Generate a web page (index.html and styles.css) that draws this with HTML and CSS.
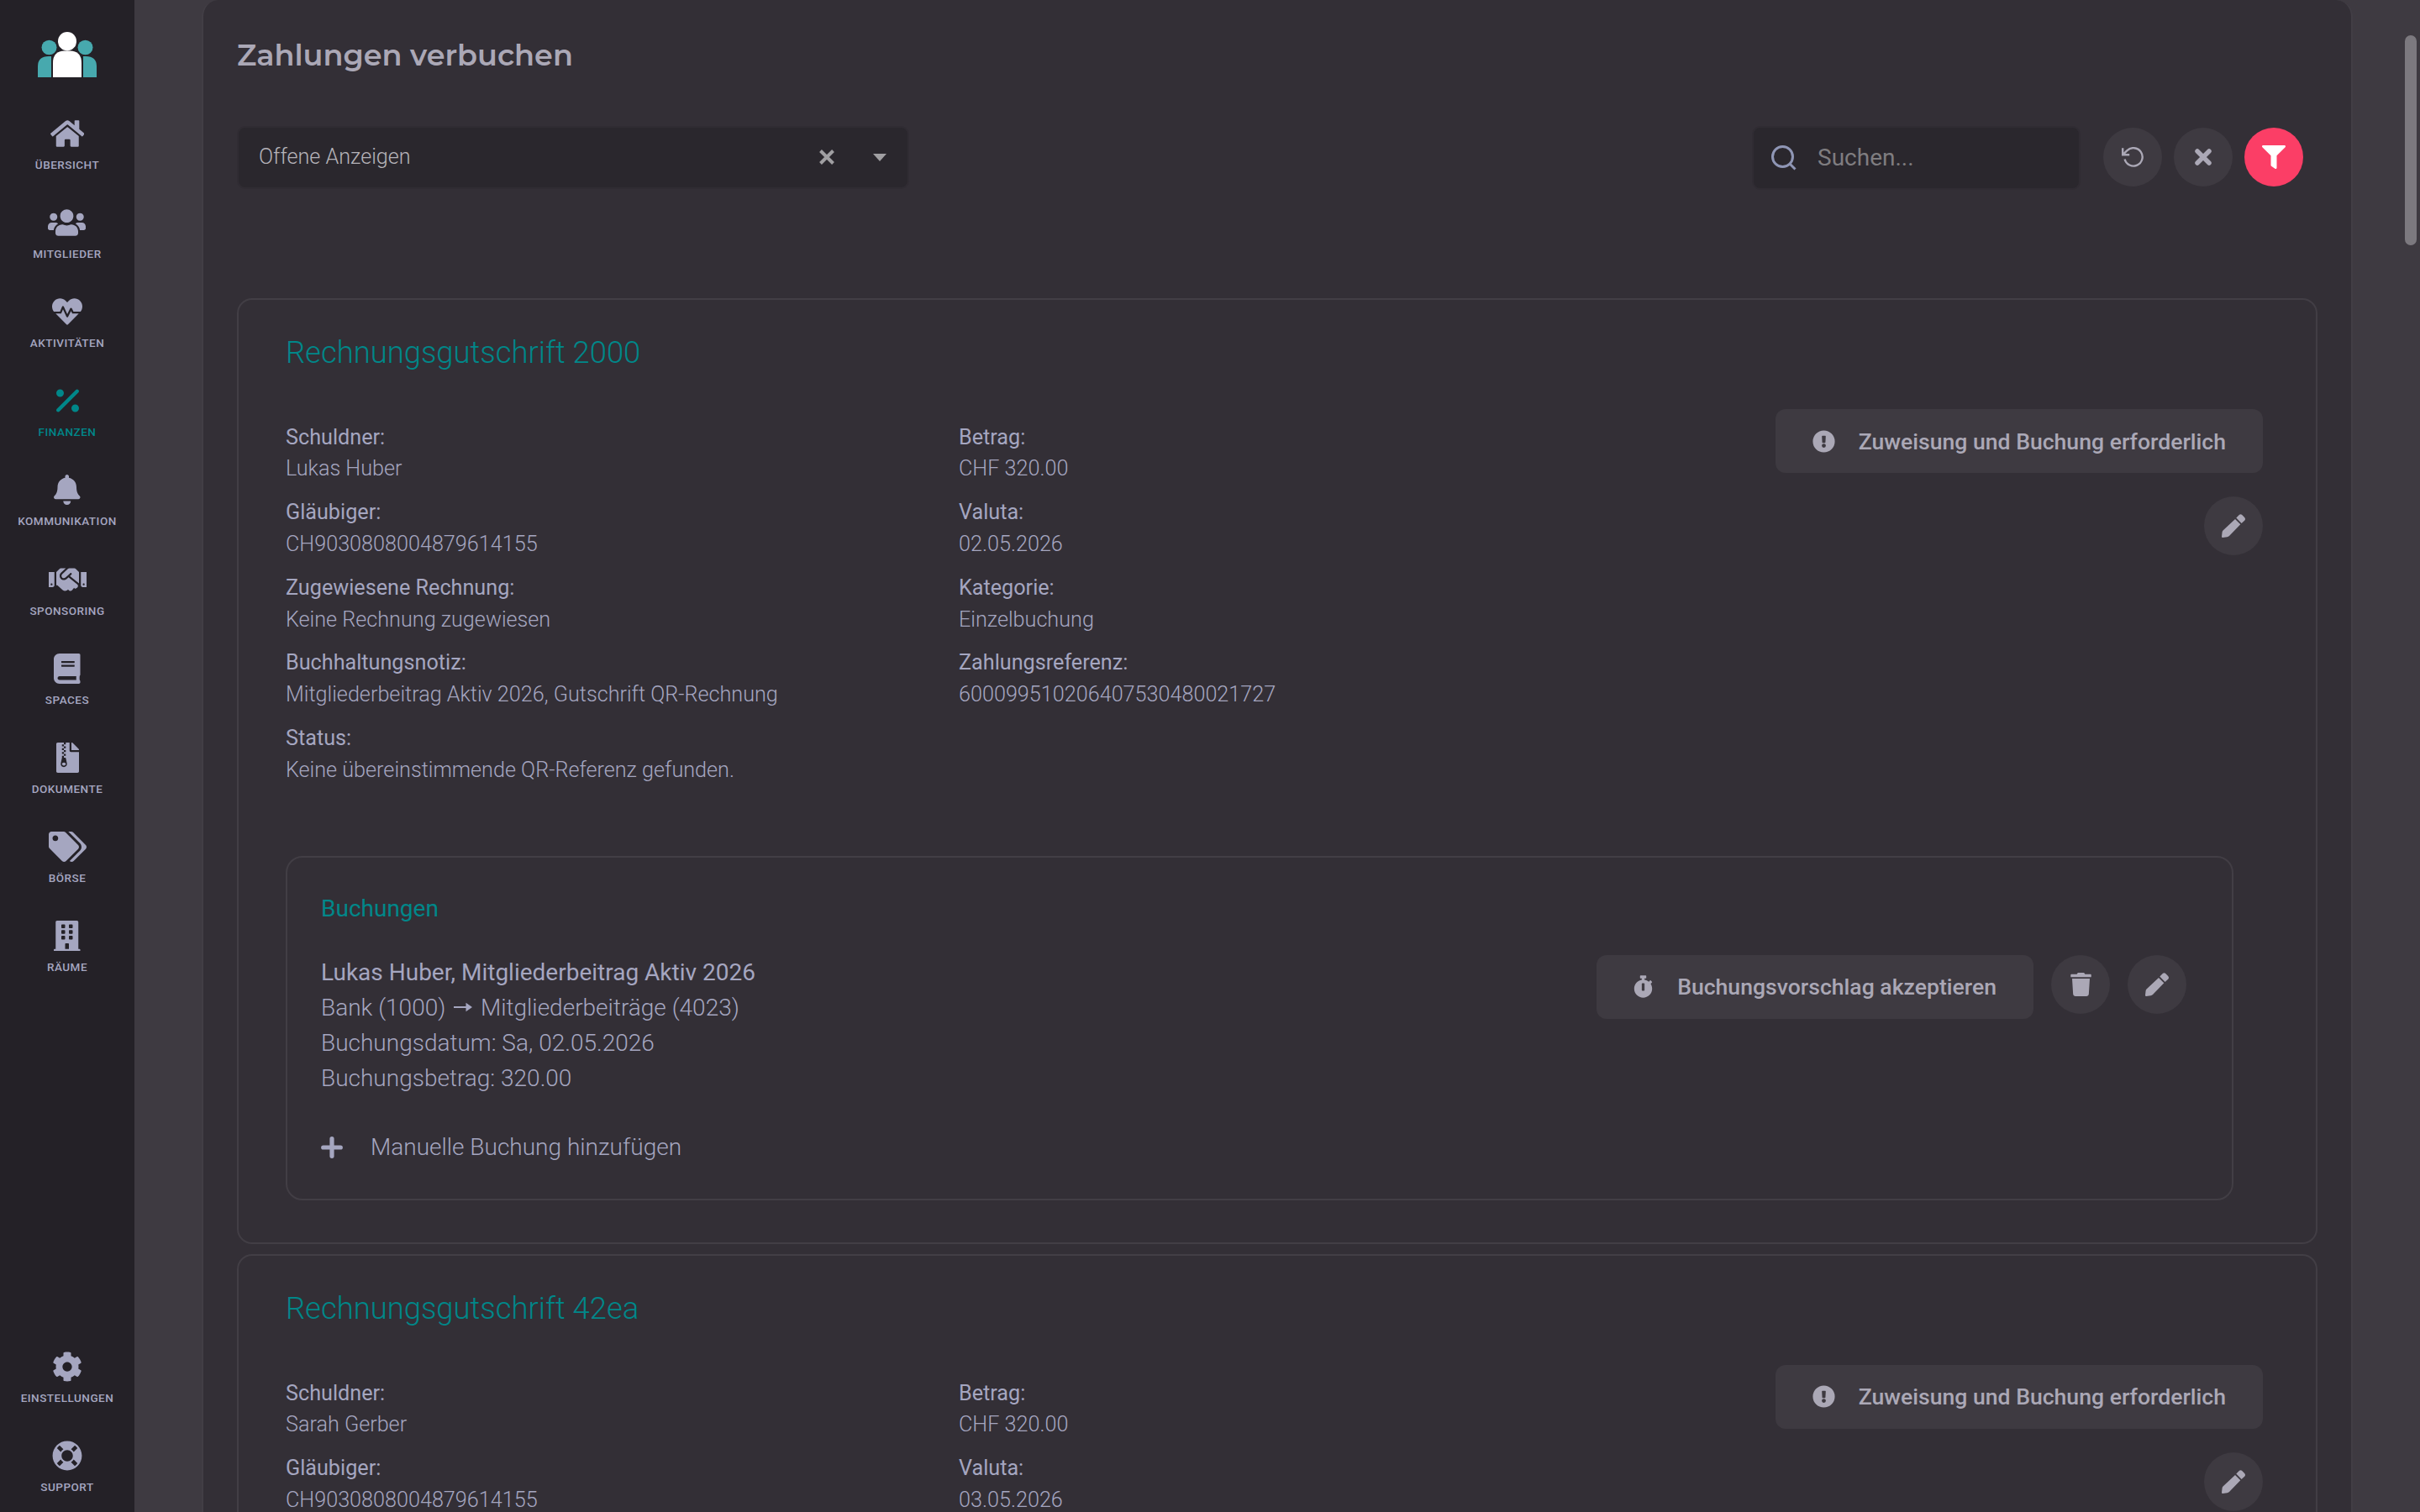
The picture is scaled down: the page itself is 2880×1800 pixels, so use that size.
FILE: index.html
```html
<!DOCTYPE html>
<html lang="de">
<head>
    <meta charset="UTF-8">
    <meta name="viewport" content="width=device-width, initial-scale=1.0">
    <title>Zahlungen verbuchen</title>
    <link rel="stylesheet" href="styles.css">
</head>
<body>
    <!-- Shared button icons -->
    <svg class="icon-defs" aria-hidden="true">
        <symbol id="icon-pencil" viewBox="0 0 28 28">
            <path d="M16 6l6.300 6.300L9 26q-1 1-2.500 1.300L1.200 28Q0 28 0 27l.6-5.500q.2-1.500 1.200-2.300zM17.300 4.600L21 .8q1.500-1.200 3 0L27.200 4q1.500 1.900.2 3.400L23.600 11z"/>
        </symbol>
        <symbol id="icon-alert" viewBox="0 0 512 512">
            <path fill-rule="evenodd" d="M504 256a248 248 0 1 1-496 0 248 248 0 1 1 496 0zM256 306a46 46 0 1 0 0 92 46 46 0 1 0 0-92zM212.300 140.700l7.400 136c.300 6.300 5.600 11.300 12 11.300h48.600c6.400 0 11.600-5 12-11.300l7.400-136c.400-6.900-5.100-12.700-12-12.700h-63.400c-6.900 0-12.300 5.800-12 12.700z"/>
        </symbol>
    </svg>

    <nav class="sidebar">
        <a class="logo" href="#">
            <svg viewBox="0 0 70 54">
                <g fill="#47a9ae">
                    <ellipse cx="13.500" cy="18.500" rx="9" ry="8.700"/>
                    <path d="M0 54V41q0-12 13-12h3v25z"/>
                    <ellipse cx="56.500" cy="18.500" rx="9" ry="8.700"/>
                    <path d="M70 54V41q0-12-13-12h-3v25z"/>
                </g>
                <path fill="#fff" d="M18 54V37q0-14.500 14-14.500h6q14 0 14 14.500v17z"/>
                <ellipse fill="#fff" cx="35" cy="11.200" rx="11" ry="11.200"/>
            </svg>
        </a>
        <a class="nav-item" href="#">
            <svg viewBox="0 0 576 512"><path d="M280.37 148.26L96 300.11V464a16 16 0 0 0 16 16l112.06-.29a16 16 0 0 0 15.92-16V368a16 16 0 0 1 16-16h64a16 16 0 0 1 16 16v95.64a16 16 0 0 0 16 16.05L464 480a16 16 0 0 0 16-16V300L295.67 148.26a12.19 12.19 0 0 0-15.3 0zM571.6 251.47L488 182.56V44.05a12 12 0 0 0-12-12h-56a12 12 0 0 0-12 12v72.61L318.47 43a48 48 0 0 0-61 0L4.34 251.47a12 12 0 0 0-1.6 16.9l25.5 31A12 12 0 0 0 45.15 301l235.22-193.74a12.19 12.19 0 0 1 15.3 0L530.9 301a12 12 0 0 0 16.9-1.6l25.5-31a12 12 0 0 0-1.7-16.93z"/></svg>
            <span>Übersicht</span>
        </a>
        <a class="nav-item" href="#">
            <svg viewBox="0 0 640 512"><path d="M96 224c35.3 0 64-28.7 64-64s-28.7-64-64-64-64 28.7-64 64 28.7 64 64 64zm448 0c35.3 0 64-28.7 64-64s-28.7-64-64-64-64 28.7-64 64 28.7 64 64 64zm32 32h-64c-17.6 0-33.5 7.1-45.1 18.6 40.3 22.1 68.9 62 75.1 109.4h66c17.7 0 32-14.3 32-32v-32c0-35.3-28.7-64-64-64zm-256 0c61.9 0 112-50.1 112-112S381.9 32 320 32 208 82.1 208 144s50.1 112 112 112zm76.8 32h-8.3c-20.8 10-43.9 16-68.5 16s-47.6-6-68.5-16h-8.3C179.6 288 128 339.6 128 403.2V432c0 26.5 21.5 48 48 48h288c26.500 0 48-21.500 48-48v-28.8c0-63.600-51.600-115.200-115.200-115.200zm-223.700-13.400C161.500 263.100 145.600 256 128 256H64c-35.300 0-64 28.700-64 64v32c0 17.700 14.300 32 32 32h65.900c6.300-47.400 34.900-87.300 75.200-109.400z"/></svg>
            <span>Mitglieder</span>
        </a>
        <a class="nav-item" href="#">
            <svg viewBox="0 0 512 512"><path d="M320.2 243.8l-49.7 99.4c-6 12.1-23.4 11.7-28.9-.6l-56.9-126.3-30 71.7H60.6l182.5 186.5c7.1 7.3 18.6 7.3 25.7 0L451.4 288H342.3l-22.1-44.2zM473.7 73.9l-2.4-2.5c-51.5-52.6-135.8-52.6-187.4 0L256 100l-27.9-28.5c-51.5-52.7-135.9-52.7-187.4 0l-2.4 2.4C-10.4 123.7-12.5 203 31 256h102.4l35.9-86.2c5.4-12.9 23.6-13.2 29.4-.4l58.2 129.3 49-97.9c5.9-11.8 22.7-11.8 28.6 0l27.6 55.2H481c43.5-53 41.4-132.3-7.3-182.1z"/></svg>
            <span>Aktivitäten</span>
        </a>
        <a class="nav-item active" href="#">
            <svg viewBox="0 0 384 512"><path d="M374.6 118.6c12.5-12.5 12.5-32.8 0-45.3s-32.8-12.5-45.3 0l-320 320c-12.5 12.5-12.5 32.8 0 45.3s32.8 12.5 45.3 0l320-320zM128 128A64 64 0 1 0 0 128a64 64 0 1 0 128 0zM384 384a64 64 0 1 0-128 0 64 64 0 1 0 128 0z"/></svg>
            <span>Finanzen</span>
        </a>
        <a class="nav-item" href="#">
            <svg viewBox="0 0 448 512"><path d="M224 512c35.32 0 63.97-28.65 63.97-64H160.03c0 35.35 28.65 64 63.97 64zm215.39-149.71c-19.32-20.76-55.47-51.99-55.47-154.29 0-77.7-54.48-139.9-127.94-155.16V32c0-17.67-14.32-32-31.98-32s-31.98 14.33-31.98 32v20.84C118.56 68.1 64.08 130.3 64.08 208c0 102.3-36.15 133.53-55.47 154.29-6 6.45-8.66 14.16-8.61 21.71.11 16.4 12.98 32 32.1 32h383.8c19.12 0 32-15.6 32.1-32 .05-7.55-2.61-15.27-8.61-21.71z"/></svg>
            <span>Kommunikation</span>
        </a>
        <a class="nav-item" href="#">
            <svg viewBox="0 0 640 512"><path d="M434.7 64h-85.9c-8 0-15.7 3-21.6 8.4l-98.3 90c-.1.1-.2.3-.3.4-16.6 15.6-16.3 40.5-2.1 56 12.7 13.9 39.4 17.6 56.1 2.7.1-.1.3-.1.4-.2l79.9-73.2c6.5-5.9 16.7-5.5 22.6 1 6 6.5 5.5 16.6-1 22.6l-26.1 23.9L504 313.8c2.9 2.4 5.5 5 7.9 7.7V128l-54.6-54.6c-5.9-6-14.1-9.4-22.6-9.4zM544 128.2v223.9c0 17.7 14.3 32 32 32h64V128.2h-96zm48 223.9c-8.8 0-16-7.2-16-16s7.2-16 16-16 16 7.2 16 16-7.2 16-16 16zM0 384h64c17.7 0 32-14.3 32-32V128.2H0V384zm48-63.9c8.8 0 16 7.2 16 16s-7.2 16-16 16-16-7.2-16-16c0-8.9 7.2-16 16-16zm435.9 18.6L334.6 217.5l-30 27.5c-29.7 27.1-75.2 24.5-101.7-4.4-26.9-29.4-24.8-74.9 4.4-101.7L289.1 64h-83.8c-8.5 0-16.6 3.4-22.6 9.4L128 128v223.9h18.3l90.5 81.9c27.4 22.3 67.7 18.1 90-9.3l.2-.2 17.9 15.5c15.9 13 39.4 10.5 52.3-5.4l31.4-38.6 5.4 4.4c13.7 11.1 33.9 9.1 45-4.7l9.5-11.7c11.2-13.8 9.1-33.9-4.6-45.1z"/></svg>
            <span>Sponsoring</span>
        </a>
        <a class="nav-item" href="#">
            <svg viewBox="0 0 448 512"><path d="M448 360V24c0-13.3-10.7-24-24-24H96C43 0 0 43 0 96v320c0 53 43 96 96 96h328c13.3 0 24-10.7 24-24v-16c0-7.5-3.5-14.3-8.9-18.7-4.2-15.4-4.2-59.3 0-74.7 5.4-4.3 8.9-11.1 8.9-18.6zM128 134c0-3.3 2.7-6 6-6h212c3.3 0 6 2.7 6 6v20c0 3.3-2.7 6-6 6H134c-3.3 0-6-2.7-6-6v-20zm0 64c0-3.3 2.7-6 6-6h212c3.3 0 6 2.7 6 6v20c0 3.3-2.7 6-6 6H134c-3.3 0-6-2.7-6-6v-20zm253.4 250H96c-17.7 0-32-14.3-32-32 0-17.6 14.4-32 32-32h285.4c-1.9 17.1-1.9 46.9 0 64z"/></svg>
            <span>Spaces</span>
        </a>
        <a class="nav-item" href="#">
            <svg viewBox="0 0 384 512"><path d="M377 105L279.1 7c-4.5-4.5-10.6-7-17-7H256v128h128v-6.1c0-6.3-2.5-12.4-7-16.9zM128.400 336c-17.900 0-32.400 12.100-32.400 27 0 15 14.600 27 32.500 27s32.400-12.100 32.400-27-14.600-27-32.500-27zM224 136V0h-63.6v32h-32V0H24C10.7 0 0 10.7 0 24v464c0 13.3 10.7 24 24 24h336c13.3 0 24-10.7 24-24V160H248c-13.2 0-24-10.8-24-24zM95.900 32h32v32h-32zm32.300 384c-33.200 0-58-30.400-51.400-62.900L96.400 256v-32h32v-32h-32v-32h32v-32h-32V96h32V64h32v32h-32v32h32v32h-32v32h32v32h-32v32h22.100c5.700 0 10.700 4.100 11.800 9.700l17.300 87.700c6.400 32.400-18.400 62.600-51.400 62.600z"/></svg>
            <span>Dokumente</span>
        </a>
        <a class="nav-item" href="#">
            <svg viewBox="0 0 640 512"><path d="M497.941 225.941L286.059 14.059A48 48 0 0 0 252.118 0H48C21.49 0 0 21.49 0 48v204.118a48 48 0 0 0 14.059 33.941l211.882 211.882c18.744 18.745 49.136 18.746 67.882 0l204.118-204.118c18.745-18.745 18.745-49.137 0-67.882zM112 160c-26.51 0-48-21.49-48-48s21.49-48 48-48 48 21.49 48 48-21.49 48-48 48zm513.941 133.823L421.823 497.941c-18.745 18.745-49.137 18.745-67.882 0l-.36-.36L527.64 323.522c16.999-16.999 26.36-39.6 26.36-63.64s-9.362-46.641-26.36-63.64L331.397 0h48.721a48 48 0 0 1 33.941 14.059l211.882 211.882c18.745 18.745 18.745 49.137 0 67.882z"/></svg>
            <span>Börse</span>
        </a>
        <a class="nav-item" href="#">
            <svg viewBox="0 0 448 512"><path d="M436 480h-20V24c0-13.255-10.745-24-24-24H56C42.745 0 32 10.745 32 24v456H12c-6.627 0-12 5.373-12 12v20h448v-20c0-6.627-5.373-12-12-12zM128 76c0-6.627 5.373-12 12-12h40c6.627 0 12 5.373 12 12v40c0 6.627-5.373 12-12 12h-40c-6.627 0-12-5.373-12-12V76zm0 96c0-6.627 5.373-12 12-12h40c6.627 0 12 5.373 12 12v40c0 6.627-5.373 12-12 12h-40c-6.627 0-12-5.373-12-12v-40zm52 148h-40c-6.627 0-12-5.373-12-12v-40c0-6.627 5.373-12 12-12h40c6.627 0 12 5.373 12 12v40c0 6.627-5.373 12-12 12zm76 160h-64v-84c0-6.627 5.373-12 12-12h40c6.627 0 12 5.373 12 12v84zm64-172c0 6.627-5.373 12-12 12h-40c-6.627 0-12-5.373-12-12v-40c0-6.627 5.373-12 12-12h40c6.627 0 12 5.373 12 12v40zm0-96c0 6.627-5.373 12-12 12h-40c-6.627 0-12-5.373-12-12v-40c0-6.627 5.373-12 12-12h40c6.627 0 12 5.373 12 12v40zm0-96c0 6.627-5.373 12-12 12h-40c-6.627 0-12-5.373-12-12V76c0-6.627 5.373-12 12-12h40c6.627 0 12 5.373 12 12v40z"/></svg>
            <span>Räume</span>
        </a>
        <div class="sidebar-bottom">
            <a class="nav-item" href="#">
                <svg viewBox="0 0 512 512"><path d="M487.4 315.7l-42.6-24.6c4.3-23.2 4.3-47 0-70.2l42.6-24.6c4.9-2.8 7.1-8.6 5.5-14-11.1-35.6-30-67.8-54.7-94.6-3.8-4.1-10-5.1-14.8-2.3L380.8 110c-17.9-15.4-38.5-27.3-60.8-35.1V25.8c0-5.6-3.9-10.5-9.4-11.7-36.7-8.2-74.3-7.8-109.2 0-5.5 1.2-9.4 6.1-9.4 11.7V75c-22.2 7.9-42.8 19.8-60.8 35.1L88.7 85.5c-4.9-2.8-11-1.9-14.8 2.3-24.7 26.7-43.6 58.9-54.7 94.6-1.7 5.4.6 11.2 5.5 14L67.3 221c-4.3 23.2-4.3 47 0 70.2l-42.6 24.6c-4.9 2.8-7.1 8.6-5.5 14 11.1 35.6 30 67.8 54.7 94.6 3.8 4.1 10 5.1 14.8 2.3l42.6-24.6c17.9 15.4 38.5 27.3 60.8 35.1v49.2c0 5.6 3.9 10.5 9.4 11.7 36.7 8.2 74.3 7.8 109.2 0 5.5-1.2 9.4-6.1 9.4-11.7v-49.2c22.2-7.9 42.8-19.8 60.8-35.1l42.6 24.6c4.9 2.8 11 1.9 14.8-2.3 24.7-26.7 43.6-58.9 54.7-94.6 1.5-5.5-.7-11.3-5.6-14.1zM256 336c-44.1 0-80-35.9-80-80s35.9-80 80-80 80 35.9 80 80-35.9 80-80 80z"/></svg>
                <span>Einstellungen</span>
            </a>
            <a class="nav-item" href="#">
                <svg viewBox="0 0 512 512"><path d="M256 8C119.033 8 8 119.033 8 256s111.033 248 248 248 248-111.033 248-248S392.967 8 256 8zm173.696 119.559l-63.399 63.399c-10.987-18.559-26.67-34.252-45.255-45.255l63.399-63.399a218.396 218.396 0 0 1 45.255 45.255zM256 352c-53.019 0-96-42.981-96-96s42.981-96 96-96 96 42.981 96 96-42.981 96-96 96zM127.559 82.304l63.399 63.399c-18.559 10.987-34.252 26.67-45.255 45.255l-63.399-63.399a218.372 218.372 0 0 1 45.255-45.255zM82.304 384.441l63.399-63.399c10.987 18.559 26.67 34.252 45.255 45.255l-63.399 63.399a218.396 218.396 0 0 1-45.255-45.255zm302.137 45.255l-63.399-63.399c18.559-10.987 34.252-26.67 45.255-45.255l63.399 63.399a218.403 218.403 0 0 1-45.255 45.255z"/></svg>
                <span>Support</span>
            </a>
        </div>
    </nav>

    <main class="panel">
        <h1>Zahlungen verbuchen</h1>

        <div class="toolbar">
            <div class="select">
                <span>Offene Anzeigen</span>
                <svg class="select-clear" viewBox="0 0 20 20"><path d="M2.500 2.500l15 15M17.500 2.500l-15 15"/></svg>
                <svg class="select-caret" viewBox="0 0 16 9"><path d="M0 0h16L8 9z"/></svg>
            </div>
            <div class="search">
                <svg viewBox="0 0 30 30"><circle cx="13.500" cy="13.500" r="12"/><path d="M22 22l6.500 6.500"/></svg>
                <input type="text" placeholder="Suchen...">
            </div>
            <button class="round">
                <svg class="icon-reset" viewBox="0 0 26 24"><path d="M1.200 1.200v8h8M1.600 8.800L6.500 4.200A10.700 10.700 0 1 1 3.600 14.500"/></svg>
            </button>
            <button class="round">
                <svg class="icon-close" viewBox="0 0 20 20"><path d="M3 3l14 14M17 3L3 17"/></svg>
            </button>
            <button class="round filter">
                <svg class="icon-filter" viewBox="0 0 512 512"><path d="M487.976 0H24.028C2.710 0-8.047 25.866 7.058 40.971L192 225.941V432c0 7.831 3.821 15.170 10.237 19.662l80 55.980C298.020 518.690 320 507.493 320 487.980V225.941l184.947-184.970C520.021 25.896 509.338 0 487.976 0z"/></svg>
            </button>
        </div>

        <section class="card">
            <h2>Rechnungsgutschrift 2000</h2>
            <div class="card-body">
                <dl>
                    <dt>Schuldner:</dt>
                    <dd>Lukas Huber</dd>
                    <dt>Gläubiger:</dt>
                    <dd>CH9030808004879614155</dd>
                    <dt>Zugewiesene Rechnung:</dt>
                    <dd>Keine Rechnung zugewiesen</dd>
                    <dt>Buchhaltungsnotiz:</dt>
                    <dd>Mitgliederbeitrag Aktiv 2026, Gutschrift QR-Rechnung</dd>
                    <dt>Status:</dt>
                    <dd>Keine übereinstimmende QR-Referenz gefunden.</dd>
                </dl>
                <dl>
                    <dt>Betrag:</dt>
                    <dd>CHF 320.00</dd>
                    <dt>Valuta:</dt>
                    <dd>02.05.2026</dd>
                    <dt>Kategorie:</dt>
                    <dd>Einzelbuchung</dd>
                    <dt>Zahlungsreferenz:</dt>
                    <dd>600099510206407530480021727</dd>
                </dl>
                <div class="card-actions">
                    <button class="btn"><svg class="icon-alert"><use href="#icon-alert"/></svg>Zuweisung und Buchung erforderlich</button>
                    <button class="round"><svg class="icon-pencil"><use href="#icon-pencil"/></svg></button>
                </div>
            </div>

            <div class="bookings">
                <h3>Buchungen</h3>
                <div class="booking">
                    <div class="booking-text">
                        <strong>Lukas Huber, Mitgliederbeitrag Aktiv 2026</strong>
                        <p>Bank (1000) <svg class="arrow" viewBox="0 0 22 14"><path d="M0 5.900h14.500V1.800L22 7l-7.500 5.200V8.100H0z"/></svg> Mitgliederbeiträge (4023)</p>
                        <p>Buchungsdatum: Sa, 02.05.2026</p>
                        <p>Buchungsbetrag: 320.00</p>
                    </div>
                    <div class="booking-actions">
                        <button class="btn accept"><svg class="icon-stopwatch" viewBox="0 0 448 512"><path d="M432 304c0 114.900-93.100 208-208 208S16 418.900 16 304c0-104 76.300-190.200 176-205.500V64h-28c-6.600 0-12-5.400-12-12V12c0-6.600 5.400-12 12-12h120c6.600 0 12 5.400 12 12v40c0 6.600-5.400 12-12 12h-28v34.500c37.500 5.800 71.700 21.600 99.700 44.600l27.500-27.500c4.700-4.700 12.300-4.700 17 0l28.300 28.300c4.700 4.700 4.700 12.300 0 17l-29.400 29.400-.6.600C419.700 223.300 432 262.200 432 304zm-176 36V188.500c0-6.600-5.400-12-12-12h-40c-6.600 0-12 5.400-12 12V340c0 6.600 5.400 12 12 12h40c6.600 0 12-5.400 12-12z"/></svg>Buchungsvorschlag akzeptieren</button>
                        <button class="round"><svg class="icon-trash" viewBox="0 0 448 512"><path d="M432 32H312l-9.400-18.700A24 24 0 0 0 281.100 0H166.800a23.720 23.720 0 0 0-21.400 13.300L136 32H16A16 16 0 0 0 0 48v32a16 16 0 0 0 16 16h416a16 16 0 0 0 16-16V48a16 16 0 0 0-16-16zM53.200 467a48 48 0 0 0 47.900 45h245.800a48 48 0 0 0 47.900-45L416 128H32z"/></svg></button>
                        <button class="round"><svg class="icon-pencil"><use href="#icon-pencil"/></svg></button>
                    </div>
                </div>
                <a class="add-booking" href="#">
                    <svg viewBox="0 0 26 26"><path d="M13 2.700v20.600M2.700 13h20.600"/></svg>
                    Manuelle Buchung hinzufügen
                </a>
            </div>
        </section>

        <section class="card">
            <h2>Rechnungsgutschrift 42ea</h2>
            <div class="card-body">
                <dl>
                    <dt>Schuldner:</dt>
                    <dd>Sarah Gerber</dd>
                    <dt>Gläubiger:</dt>
                    <dd>CH9030808004879614155</dd>
                </dl>
                <dl>
                    <dt>Betrag:</dt>
                    <dd>CHF 320.00</dd>
                    <dt>Valuta:</dt>
                    <dd>03.05.2026</dd>
                </dl>
                <div class="card-actions">
                    <button class="btn"><svg class="icon-alert"><use href="#icon-alert"/></svg>Zuweisung und Buchung erforderlich</button>
                    <button class="round"><svg class="icon-pencil"><use href="#icon-pencil"/></svg></button>
                </div>
            </div>
        </section>
    </main>
    <div class="scroll-thumb"></div>
</body>
</html>
```
FILE: styles.css
```css
* {
    box-sizing: border-box;
}
html {
    font-size: 28px;
}
body {
    margin: 0;
    height: 1800px;
    display: flex;
    overflow: hidden;
    background: #3e3a41;
    color: #a5a6c0;
    font-family: Roboto, sans-serif;
    font-weight: 300;
    line-height: 1.5;
}
a {
    color: inherit;
    text-decoration: none;
}
h1, h2, h3, p, dl, dd {
    margin: 0;
}
svg {
    display: block;
    flex: none;
    fill: currentColor;
}
.icon-defs {
    display: none;
}

/* Sidebar */
.sidebar {
    width: 160px;
    height: 1800px;
    flex: none;
    display: flex;
    flex-direction: column;
    align-items: center;
    background: #242127;
}
.logo {
    margin: 38px 0 49px;
}
.logo svg {
    width: 70px;
    height: 54px;
}
.nav-item {
    height: 106.12px;
    flex: none;
    display: flex;
    flex-direction: column;
    align-items: center;
    font-size: 13.5px;
    font-weight: 500;
    line-height: 20px;
    letter-spacing: 0.5px;
    text-transform: uppercase;
}
.nav-item svg {
    height: 36px;
    margin-bottom: 9px;
}
.nav-item.active {
    color: #008789;
}
.sidebar-bottom {
    margin-top: auto;
    height: 191px;
}

/* Main panel */
.panel {
    width: 2560px;
    height: 1800px;
    margin: 0 0 0 80px;
    padding: 38px 40px 0;
    flex: none;
    overflow: hidden;
    background: #332f36;
    border: 2px solid #423e45;
    border-width: 0 2px;
    border-radius: 20px 20px 0 0;
}
h1 {
    font-family: Montserrat, Inter, sans-serif;
    font-size: 35px;
    font-weight: 600;
    line-height: 56px;
    color: #aba8b6;
}
.toolbar {
    display: flex;
    align-items: flex-start;
    margin: 56px 17px 129px 0;
    height: 76px;
}
.select, .search {
    display: flex;
    align-items: center;
    height: 76px;
    background: #2a272d;
    border: 2px solid #302c33;
    border-radius: 10px;
}
.select {
    width: 800px;
    height: 75px;
    padding: 0 25px 1px 24px;
    margin-right: auto;
    font-size: 25.2px;
    color: #b5b3b9;
}
.select span {
    flex: 1;
}
.select-clear {
    width: 20px;
    height: 20px;
    margin-right: 45px;
    fill: none;
    stroke: #a09fa2;
    stroke-width: 4;
}
.select-caret {
    width: 16px;
    height: 9px;
    color: #a09fa2;
}
.search {
    width: 391px;
    padding: 0 20px 1px 21px;
    margin-right: 27px;
}
.search svg {
    width: 30px;
    height: 30px;
    fill: none;
    stroke: #8f96b5;
    stroke-width: 3;
}
.search input {
    width: 280px;
    margin-left: 25px;
    padding: 0;
    border: 0;
    background: none;
    font: 400 28px Roboto, sans-serif;
}
.search input::placeholder {
    color: #7f7d80;
}

/* Buttons */
button {
    border: 0;
    background: #3e3a41;
    color: #aba8b6;
    font-family: inherit;
}
.round {
    width: 70px;
    height: 70px;
    padding: 0;
    flex: none;
    display: flex;
    align-items: center;
    justify-content: center;
    border-radius: 50%;
}
.toolbar .round {
    margin-top: 2px;
}
.round + .round {
    margin-left: 14px;
}
.round.filter {
    background: #fb3e66;
    color: #fff;
}
.btn {
    height: 76px;
    padding: 0 44px;
    display: flex;
    align-items: center;
    border-radius: 12px;
    font-size: 26.6px;
    font-weight: 500;
    white-space: nowrap;
}
.icon-reset {
    width: 26px;
    height: 24px;
    fill: none;
    stroke: currentColor;
    stroke-width: 2.4;
}
.icon-close {
    width: 20px;
    height: 20px;
    stroke: currentColor;
    stroke-width: 5.5;
    stroke-linecap: round;
}
.icon-filter, .icon-pencil {
    width: 28px;
    height: 28px;
}
.icon-alert {
    width: 27px;
    height: 27px;
    margin-right: 28px;
}
.icon-stopwatch {
    width: 23px;
    height: 27px;
    margin-right: 29px;
}
.icon-trash {
    width: 25px;
    height: 28px;
}

/* Payment cards */
.card {
    margin-bottom: 12px;
    padding: 36px 63px 50px 56px;
    border: 2px solid #423e45;
    border-radius: 18px;
}
h2 {
    font-size: 36.4px;
    font-weight: 300;
    line-height: 54px;
    color: #008789;
}
.card-body {
    display: flex;
    padding-top: 54.600px;
}
.card-body dl {
    width: 801px;
    font-size: 25.2px;
    line-height: 37.8px;
}
dt {
    font-weight: 400;
}
dd {
    margin-bottom: 14px;
}
.card-actions {
    margin-left: auto;
    margin-top: -14.600px;
    display: flex;
    flex-direction: column;
    align-items: flex-end;
    gap: 28px;
}

/* Bookings inside a card */
.bookings {
    margin: 69.400px 35px 0 0;
    padding: 40px 54px 0 40px;
    height: 410px;
    border: 2px solid #423e45;
    border-radius: 20px;
}
h3 {
    font-size: 28px;
    font-weight: 400;
    line-height: 42px;
    color: #008789;
}
.booking {
    display: flex;
    justify-content: space-between;
    margin-top: 34px;
}
.booking-text strong {
    font-weight: 400;
}
.booking-text p {
    line-height: 42px;
}
.arrow {
    display: inline-block;
    width: 22px;
    height: 14px;
    margin: 0 3px;
    vertical-align: 3px;
}
.booking-actions {
    display: flex;
}
.booking-actions .round {
    margin-left: 21px;
}
.add-booking {
    display: flex;
    align-items: center;
    margin-top: 40px;
}
.add-booking svg {
    width: 26px;
    height: 26px;
    margin-right: 33px;
    stroke: currentColor;
    stroke-width: 5.2;
    stroke-linecap: round;
}

.scroll-thumb {
    position: fixed;
    top: 42px;
    right: 4px;
    width: 14px;
    height: 250px;
    border-radius: 7px;
    background: #7c797f;
}
```
